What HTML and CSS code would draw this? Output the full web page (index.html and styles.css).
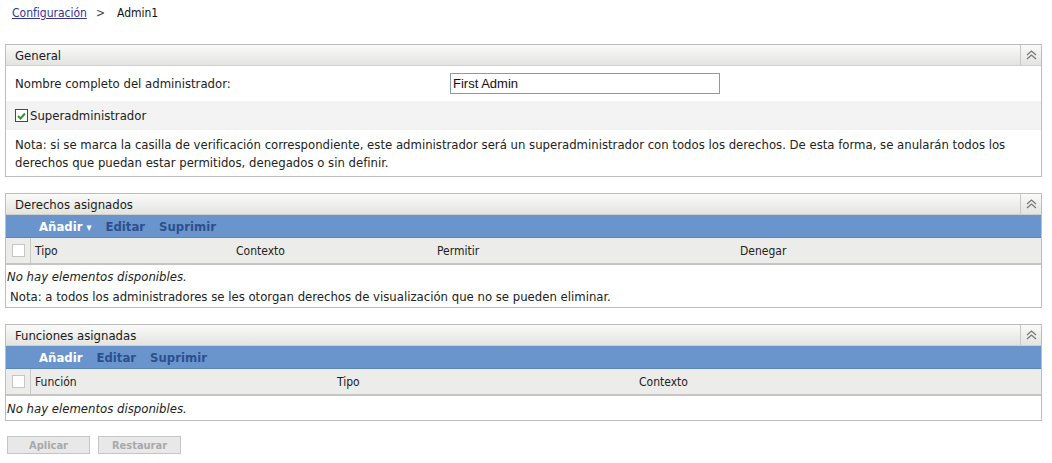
FILE: index.html
```html
<!DOCTYPE html>
<html lang="es">
<head>
    <meta charset="UTF-8">
    <title>Admin1</title>
    <link rel="stylesheet" href="styles.css">
</head>
<body>
    <div class="page">
        <div class="breadcrumb">
            <a href="#" class="crumb-link">Configuración</a>
            <span class="crumb-sep">&gt;</span>
            <span class="crumb-current">Admin1</span>
        </div>

        <div class="panel">
            <div class="panel-head">
                <span class="panel-title">General</span>
                <span class="collapse">
                    <svg width="11" height="10" viewBox="0 0 11 10"><path d="M1 5 L5.5 1 L10 5 M1 9 L5.5 5 L10 9" fill="none" stroke="#777" stroke-width="1.3"/></svg>
                </span>
            </div>
            <div class="row">
                <label class="field-label">Nombre completo del administrador:</label>
                <input class="text-input" type="text" value="First Admin">
            </div>
            <div class="row row-alt">
                <span class="check checked">
                    <svg width="9" height="8" viewBox="0 0 9 8"><path d="M1 4 L3.5 6.5 L8 1.5" fill="none" stroke="#2e9a2e" stroke-width="2"/></svg>
                </span>
                <span>Superadministrador</span>
            </div>
            <p class="note">Nota: si se marca la casilla de verificación correspondiente, este administrador será un superadministrador con todos los derechos. De esta forma, se anularán todos los derechos que puedan estar permitidos, denegados o sin definir.</p>
        </div>

        <div class="panel">
            <div class="panel-head">
                <span class="panel-title">Derechos asignados</span>
                <span class="collapse">
                    <svg width="11" height="10" viewBox="0 0 11 10"><path d="M1 5 L5.5 1 L10 5 M1 9 L5.5 5 L10 9" fill="none" stroke="#777" stroke-width="1.3"/></svg>
                </span>
            </div>
            <div class="toolbar">
                <span class="tool tool-on">Añadir <span class="caret">&#9662;</span></span>
                <span class="tool">Editar</span>
                <span class="tool">Suprimir</span>
            </div>
            <div class="grid-head rights-cols">
                <span class="check-cell"><span class="check"></span></span>
                <span>Tipo</span>
                <span>Contexto</span>
                <span>Permitir</span>
                <span>Denegar</span>
            </div>
            <div class="empty">No hay elementos disponibles.</div>
            <div class="foot-note">Nota: a todos los administradores se les otorgan derechos de visualización que no se pueden eliminar.</div>
        </div>

        <div class="panel panel-last">
            <div class="panel-head">
                <span class="panel-title">Funciones asignadas</span>
                <span class="collapse">
                    <svg width="11" height="10" viewBox="0 0 11 10"><path d="M1 5 L5.5 1 L10 5 M1 9 L5.5 5 L10 9" fill="none" stroke="#777" stroke-width="1.3"/></svg>
                </span>
            </div>
            <div class="toolbar">
                <span class="tool tool-on">Añadir</span>
                <span class="tool">Editar</span>
                <span class="tool">Suprimir</span>
            </div>
            <div class="grid-head roles-cols">
                <span class="check-cell"><span class="check"></span></span>
                <span>Función</span>
                <span>Tipo</span>
                <span>Contexto</span>
            </div>
            <div class="empty empty-tall">No hay elementos disponibles.</div>
        </div>

        <div class="actions">
            <button class="btn" disabled>Aplicar</button>
            <button class="btn" disabled>Restaurar</button>
        </div>
    </div>
</body>
</html>
```

FILE: styles.css
```css
body {
    margin: 0;
    background-color: #fff;
    color: #222;
    font-family: "DejaVu Sans Condensed", "DejaVu Sans", sans-serif;
    font-size: 13px;
}

.page {
    padding: 5px 10px 0 5px;
}

.breadcrumb {
    display: flex;
    align-items: center;
    height: 16px;
    padding: 0 0 0 7px;
    margin-bottom: 23px;
    font-size: 12px;
}

.crumb-link {
    color: #333399;
    text-decoration: underline;
}

.crumb-sep {
    margin: 0 12px 0 9px;
    color: #444;
}

.crumb-current {
    color: #111;
}

.panel {
    border: 1px solid #bdbdbd;
    margin-bottom: 16px;
}

.panel-last {
    margin-bottom: 15px;
}

.panel-head {
    display: flex;
    align-items: center;
    height: 20px;
    background: linear-gradient(#fafaf9, #e3e3e0);
    border-bottom: 1px solid #cfcfcc;
}

.panel-title {
    flex: 1;
    padding-left: 9px;
    font-size: 13px;
    color: #1a1a1a;
}

.collapse {
    display: flex;
    align-items: center;
    justify-content: center;
    width: 20px;
    height: 20px;
    border-left: 1px solid #c8c8c5;
}

.row {
    display: flex;
    align-items: center;
    height: 35px;
    padding-left: 9px;
}

.row-alt {
    height: 29px;
    background-color: #f3f3f3;
    gap: 2px;
}

.field-label {
    width: 435px;
}

.text-input {
    width: 264px;
    height: 17px;
    padding: 1px 2px;
    border: 1px solid #7f9db9;
    font-family: "Liberation Sans", Arial, sans-serif;
    font-size: 13px;
    color: #111;
}

.check {
    display: inline-flex;
    align-items: center;
    justify-content: center;
    width: 11px;
    height: 11px;
    border: 1px solid #c6c6c6;
    background-color: #fff;
}

.check.checked {
    border-color: #1c5180;
}

.note {
    margin: 0;
    padding: 6px 8px 4px 9px;
    line-height: 18px;
}

.toolbar {
    display: flex;
    align-items: center;
    gap: 14px;
    height: 22px;
    padding-left: 33px;
    background-color: #6a95cc;
    border-bottom: 1px solid #5c85bb;
    font-size: 13px;
    font-weight: bold;
}

.tool {
    color: #2d4f8e;
}

.tool-on {
    color: #fff;
}

.caret {
    font-size: 11px;
}

.grid-head {
    display: grid;
    align-items: center;
    height: 25px;
    background-color: #ececea;
    border-bottom: 2px solid #c5c5c2;
    font-size: 12px;
}

.rights-cols {
    grid-template-columns: 25px 201px 201px 303px 1fr;
}

.roles-cols {
    grid-template-columns: 25px 302px 302px 1fr;
}

.grid-head > span:not(.check-cell) {
    padding-left: 4px;
}

.check-cell {
    display: flex;
    align-items: center;
    justify-content: center;
    height: 25px;
    border-right: 1px solid #c9c9c6;
}

.empty {
    height: 23px;
    line-height: 23px;
    padding-left: 1px;
    font-style: italic;
}

.empty-tall {
    height: 24px;
    line-height: 25px;
}

.foot-note {
    height: 19px;
    line-height: 18px;
    padding-left: 4px;
}

.actions {
    display: flex;
    gap: 8px;
    padding: 0 0 0 2px;
}

.btn {
    width: 83px;
    height: 18px;
    padding: 0;
    border: 1px solid #c5c5c5;
    background-color: #e8e8e8;
    color: #a9a9a9;
    font-family: "DejaVu Sans Condensed", "DejaVu Sans", sans-serif;
    font-size: 11px;
    font-weight: bold;
}
```
